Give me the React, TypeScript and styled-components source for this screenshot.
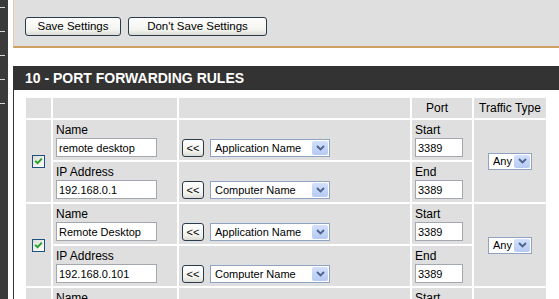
import React from "react";
import styled, { createGlobalStyle } from "styled-components";

const Global = createGlobalStyle`
  html, body { margin: 0; padding: 0; background: #ffffff; overflow: hidden; }
  body { font-family: "Liberation Sans", Arial, sans-serif; font-size: 11px; color: #000; }
`;

const Page = styled.div`
  display: flex;
  align-items: flex-start;
  width: 559px;
  height: 299px;
  overflow: hidden;
`;

const SideNav = styled.div`
  flex: 0 0 8px;
  height: 299px;
  background: #3a3a3a;
  display: flex;
  flex-direction: column;
  gap: 23px;
  padding-top: 7px;
  box-sizing: border-box;
`;

const NavTick = styled.span`
  display: block;
  width: 5px;
  height: 1px;
  background: #d6d6d6;
`;

const Main = styled.div`
  flex: 0 0 560px;
  margin-left: 5px;
  display: flex;
  flex-direction: column;
`;

const SettingsBox = styled.div`
  height: 48px;
  box-sizing: border-box;
  background: #dfdfdf;
  border-left: 1px solid #eccb9f;
  border-bottom: 2px solid #cf9f66;
  padding: 17px 0 0 11px;
  display: flex;
  gap: 7px;
  align-items: flex-start;
`;

const PushButton = styled.button<{ $w: number }>`
  width: ${(p) => p.$w}px;
  height: 19px;
  box-sizing: border-box;
  padding: 0;
  border: 1px solid #2b3b4e;
  border-radius: 3px;
  background: linear-gradient(#fefefe, #f3f3ef 70%, #dcdcd6);
  font-family: "Liberation Sans", Arial, sans-serif;
  font-size: 11.5px;
  color: #000;
  line-height: 17px;
`;

const Section = styled.div`
  margin-top: 18px;
  border-left: 1px solid #333333;
  display: flex;
  flex-direction: column;
`;

const SectionHeader = styled.div`
  height: 24px;
  background: #333333;
  color: #ffffff;
  font-family: "Liberation Sans", Arial, sans-serif;
  font-weight: bold;
  font-size: 14px;
  line-height: 25px;
  padding-left: 11px;
`;

const SectionBody = styled.div`
  background: #ffffff;
  padding: 6px 0 0 10px;
  height: 220px;
`;

const Table = styled.table`
  border-collapse: separate;
  border-spacing: 2px;
  table-layout: fixed;
  width: 524px;
`;

const HeadRow = styled.tr`
  height: 20px;
`;

const RuleRow = styled.tr`
  height: 40px;
`;

const Cell = styled.td<{ $align?: string; $valign?: string; $pad?: string }>`
  background: #dfdfdf;
  padding: ${(p) => p.$pad ?? "0"};
  text-align: ${(p) => p.$align ?? "left"};
  vertical-align: ${(p) => p.$valign ?? "top"};
  box-sizing: border-box;
  font-size: 11px;
`;

const HeadCell = styled.td<{ $shift?: number }>`
  background: #dfdfdf;
  text-align: center;
  vertical-align: middle;
  font-size: 12px;
  padding: 0 ${(p) => p.$shift ?? 0}px 0 0;
  line-height: 20px;
`;

const Label = styled.div`
  font-size: 12px;
  line-height: 15px;
  height: 15px;
`;

const TextInput = styled.input<{ $w: number }>`
  display: block;
  width: ${(p) => p.$w}px;
  height: 19px;
  box-sizing: border-box;
  margin: 0;
  border: 1px solid #a2a8ae;
  background: #ffffff;
  padding: 0 2px;
  font-family: "Liberation Sans", Arial, sans-serif;
  font-size: 11px;
  color: #000;
  outline: none;
`;

const ControlLine = styled.div`
  display: flex;
  align-items: center;
  gap: 6px;
`;

const SmallButton = styled.button`
  width: 22px;
  height: 18px;
  box-sizing: border-box;
  padding: 0;
  border: 1px solid #2b3b4e;
  border-radius: 3px;
  background: linear-gradient(#fefefe, #f2f2ee 70%, #dcdcd6);
  font-family: "Liberation Sans", Arial, sans-serif;
  font-size: 11px;
  line-height: 14px;
  color: #000;
`;

const SelectBox = styled.div<{ $w: number; $h: number }>`
  width: ${(p) => p.$w}px;
  height: ${(p) => p.$h}px;
  box-sizing: border-box;
  border: 1px solid #8ea4c2;
  background: #ffffff;
  display: inline-flex;
  align-items: center;
  justify-content: space-between;
  padding: 1px 1px 1px 4px;
  font-family: "Liberation Sans", Arial, sans-serif;
  font-size: 11px;
  text-align: left;
`;

const SelectArrow = styled.span`
  width: 16px;
  height: 100%;
  border-radius: 2px;
  background: linear-gradient(#d3e0fb, #b6caf3);
  display: flex;
  align-items: center;
  justify-content: center;
`;

const CheckBox = styled.span`
  display: inline-flex;
  width: 13px;
  height: 13px;
  box-sizing: border-box;
  border: 1px solid #1c5180;
  background: linear-gradient(135deg, #dcdcd7, #ffffff);
  align-items: center;
  justify-content: center;
  vertical-align: middle;
`;

const Chevron = () => (
  <svg width="9" height="6" viewBox="0 0 9 6">
    <path d="M1 1 L4.5 4.5 L8 1" fill="none" stroke="#4a6391" strokeWidth="1.8" />
  </svg>
);

const Check = () => (
  <svg width="9" height="8" viewBox="0 0 9 8">
    <path d="M1.2 3.8 L3.6 6.2 L7.8 1.6" fill="none" stroke="#21a121" strokeWidth="1.9" />
  </svg>
);

const FakeSelect = ({ w, h, text }: { w: number; h: number; text: string }) => (
  <SelectBox $w={w} $h={h}>
    <span>{text}</span>
    <SelectArrow>
      <Chevron />
    </SelectArrow>
  </SelectBox>
);

type Rule = { name: string; ip: string; start: string; end: string; checked: boolean };

const rules: Rule[] = [
  { name: "remote desktop", ip: "192.168.0.1", start: "3389", end: "3389", checked: true },
  { name: "Remote Desktop", ip: "192.168.0.101", start: "3389", end: "3389", checked: true },
  { name: "", ip: "", start: "", end: "", checked: false },
];

const RuleRows = ({ rule }: { rule: Rule }) => (
  <>
    <RuleRow>
      <Cell rowSpan={2} $align="center" $valign="middle">
        <CheckBox>{rule.checked ? <Check /> : null}</CheckBox>
      </Cell>
      <Cell $pad="3px 0 0 3px">
        <Label>Name</Label>
        <TextInput $w={101} readOnly value={rule.name} />
      </Cell>
      <Cell $pad="0 0 3px 3px" $valign="bottom">
        <ControlLine>
          <SmallButton>&lt;&lt;</SmallButton>
          <FakeSelect w={120} h={18} text="Application Name" />
        </ControlLine>
      </Cell>
      <Cell $pad="3px 0 0 3px">
        <Label>Start</Label>
        <TextInput $w={48} readOnly value={rule.start} />
      </Cell>
      <Cell rowSpan={2} $align="center" $valign="middle">
        <FakeSelect w={44} h={17} text="Any" />
      </Cell>
    </RuleRow>
    <RuleRow>
      <Cell $pad="3px 0 0 3px">
        <Label>IP Address</Label>
        <TextInput $w={101} readOnly value={rule.ip} />
      </Cell>
      <Cell $pad="0 0 3px 3px" $valign="bottom">
        <ControlLine>
          <SmallButton>&lt;&lt;</SmallButton>
          <FakeSelect w={120} h={18} text="Computer Name" />
        </ControlLine>
      </Cell>
      <Cell $pad="3px 0 0 3px">
        <Label>End</Label>
        <TextInput $w={48} readOnly value={rule.end} />
      </Cell>
    </RuleRow>
  </>
);

export default function App() {
  return (
    <>
      <Global />
      <Page>
        <SideNav>
          {[0, 1, 2, 3, 4].map((i) => (
            <NavTick key={i} />
          ))}
        </SideNav>
        <Main>
          <SettingsBox>
            <PushButton $w={96}>Save Settings</PushButton>
            <PushButton $w={139}>Don't Save Settings</PushButton>
          </SettingsBox>
          <Section>
            <SectionHeader>10 - PORT FORWARDING RULES</SectionHeader>
            <SectionBody>
              <Table>
                <colgroup>
                  <col style={{ width: 25 }} />
                  <col style={{ width: 124 }} />
                  <col style={{ width: 231 }} />
                  <col style={{ width: 60 }} />
                  <col style={{ width: 72 }} />
                </colgroup>
                <tbody>
                  <HeadRow>
                    <HeadCell />
                    <HeadCell />
                    <HeadCell />
                    <HeadCell $shift={10}>Port</HeadCell>
                    <HeadCell>Traffic Type</HeadCell>
                  </HeadRow>
                  {rules.map((r, i) => (
                    <RuleRows key={i} rule={r} />
                  ))}
                </tbody>
              </Table>
            </SectionBody>
          </Section>
        </Main>
      </Page>
    </>
  );
}
